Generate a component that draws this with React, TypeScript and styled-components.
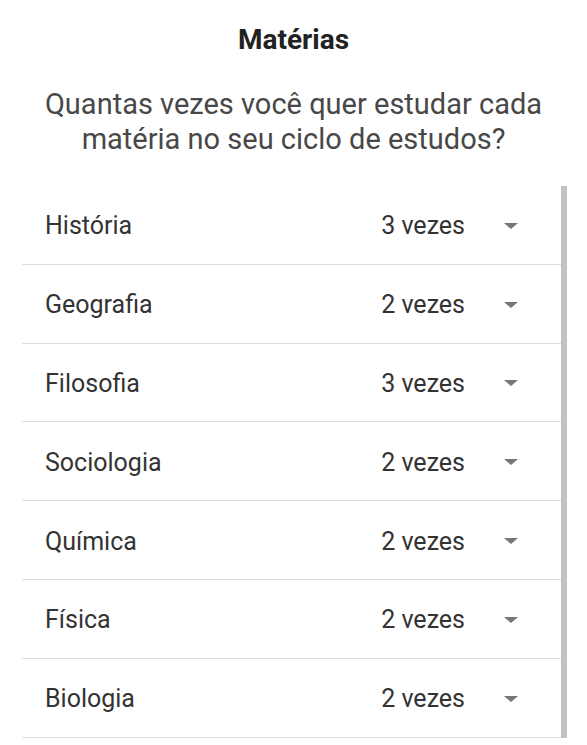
import React from "react";
import styled, { createGlobalStyle } from "styled-components";

const Global = createGlobalStyle`
  html, body { margin: 0; padding: 0; background: #ffffff; }
  body { font-family: Roboto, "Noto Sans", Arial, sans-serif; -webkit-font-smoothing: antialiased; }
`;

const Page = styled.div`
  width: 587px;
  height: 745px;
  overflow: hidden;
  background: #fff;
  display: flex;
  flex-direction: column;
  align-items: stretch;
`;

const Title = styled.h1`
  margin: 23px 0 0;
  font-size: 28px;
  line-height: 34px;
  font-weight: 700;
  color: #222;
  text-align: center;
`;

const Subtitle = styled.p`
  margin: 30px 0 0;
  padding: 0 20px;
  font-size: 29px;
  line-height: 35px;
  font-weight: 400;
  color: #484848;
  text-align: center;
`;

const ListArea = styled.div`
  margin-top: 29px;
  display: flex;
  padding-left: 22px;
  padding-right: 20px;
`;

const List = styled.ul`
  list-style: none;
  margin: 0;
  padding: 0;
  flex: 1;
`;

const Row = styled.li`
  height: 77.8px;
  display: flex;
  align-items: center;
  border-bottom: 1px solid #dcdcdc;
  padding-left: 23px;
  padding-right: 43px;
  padding-top: 2px;
  box-sizing: border-box;
  height: 78.8px;
`;

const Name = styled.span`
  flex: 1;
  font-size: 25px;
  color: #333;
`;

const Count = styled.span`
  font-size: 25px;
  color: #333;
  margin-right: 39px;
`;

const Arrow = styled.span`
  width: 0;
  height: 0;
  border-left: 7px solid transparent;
  border-right: 7px solid transparent;
  border-top: 6px solid #777;
`;

const Scrollbar = styled.div`
  width: 6px;
  align-self: stretch;
  background: #c2c2c2;
`;

const subjects: [string, number][] = [
  ["História", 3],
  ["Geografia", 2],
  ["Filosofia", 3],
  ["Sociologia", 2],
  ["Química", 2],
  ["Física", 2],
  ["Biologia", 2],
];

export default function App() {
  return (
    <Page>
      <Global />
      <Title>Matérias</Title>
      <Subtitle>Quantas vezes você quer estudar cada matéria no seu ciclo de estudos?</Subtitle>
      <ListArea>
        <List>
          {subjects.map(([name, n]) => (
            <Row key={name}>
              <Name>{name}</Name>
              <Count>{n} vezes</Count>
              <Arrow />
            </Row>
          ))}
        </List>
        <Scrollbar />
      </ListArea>
    </Page>
  );
}
